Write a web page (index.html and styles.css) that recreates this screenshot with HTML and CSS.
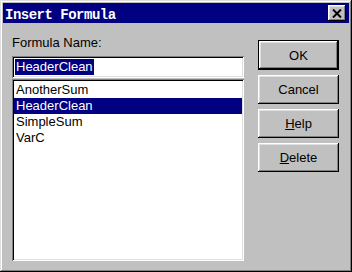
FILE: index.html
```html
<!DOCTYPE html>
<html lang="en">
<head>
  <meta charset="UTF-8">
  <title>Insert Formula</title>
  <link rel="stylesheet" href="styles.css">
</head>
<body>
  <div class="window">
    <!-- title bar -->
    <div class="title-bar">
      <span class="title">Insert Formula</span>
      <button class="close-btn">
        <svg width="10" height="9" viewBox="0 0 10 9">
          <path d="M1 0.5 L9 8.5 M9 0.5 L1 8.5" stroke="#000" stroke-width="2" fill="none"/>
        </svg>
      </button>
    </div>

    <div class="content">
      <div class="left-col">
        <div class="label">Formula Name:</div>
        <div class="textbox"><span class="selected">HeaderClean</span></div>
        <ul class="listbox">
          <li>AnotherSum</li>
          <li class="active">HeaderClean</li>
          <li>SimpleSum</li>
          <li>VarC</li>
        </ul>
      </div>
      <div class="right-col">
        <button class="btn default">OK</button>
        <button class="btn">Cancel</button>
        <button class="btn"><u>H</u>elp</button>
        <button class="btn"><u>D</u>elete</button>
      </div>
    </div>
  </div>
</body>
</html>
```

FILE: styles.css
```css
/* classic dialog look */
body {
  margin: 0;
  background: #c0c0c0;
  font-family: "Liberation Sans", Arial, sans-serif;
  font-size: 13px;
}

.window {
  width: 352px;
  height: 272px;
  box-sizing: border-box;
  padding: 3px;
  background: #c0c0c0;
  box-shadow: inset -1px -1px #000, inset 1px 1px #dfdfdf,
              inset -2px -2px #808080, inset 2px 2px #fff;
}

.title-bar {
  height: 20px;
  background: #000080;
  display: flex;
  align-items: center;
  justify-content: space-between;
  padding: 0 3px 0 2px;
}

.title {
  font-family: "Liberation Mono", "Courier New", monospace;
  font-size: 14px;
  letter-spacing: -0.5px;
  font-weight: bold;
  color: #fff;
  margin-top: 3px;
}

.close-btn {
  width: 18px;
  height: 16px;
  padding: 0;
  border: none;
  background: #c0c0c0;
  display: flex;
  align-items: center;
  justify-content: center;
  box-shadow: inset -1px -1px #000, inset 1px 1px #fff,
              inset -2px -2px #808080, inset 2px 2px #dfdfdf;
}

.content {
  display: flex;
  gap: 14px;
  padding-left: 9px;
}

.left-col {
  width: 232px;
}

.label {
  margin-top: 12px;
  line-height: 15px;
  color: #000;
}

.textbox {
  margin-top: 6px;
  height: 22px;
  box-sizing: border-box;
  padding: 3px 3px;
  background: #fff;
  box-shadow: inset 1px 1px #808080, inset -1px -1px #fff,
              inset 2px 2px #000, inset -2px -2px #dfdfdf;
}

.selected {
  display: inline-block;
  line-height: 16px;
  padding: 0 1px;
  background: #000080;
  color: #fff;
}

.listbox {
  list-style: none;
  margin: 1px 0 0 0;
  padding: 3px 2px 2px 2px;
  height: 182px;
  box-sizing: border-box;
  background: #fff;
  box-shadow: inset 1px 1px #808080, inset -1px -1px #fff,
              inset 2px 2px #000, inset -2px -2px #dfdfdf;
}

.listbox li {
  height: 16px;
  line-height: 16px;
  padding-left: 2px;
}

.listbox li.active {
  background: #000080;
  color: #fff;
}

.right-col {
  display: flex;
  flex-direction: column;
  gap: 5px;
  margin-top: 17px;
}

.btn {
  width: 81px;
  height: 29px;
  border: none;
  padding: 0;
  background: #c0c0c0;
  font-family: "Liberation Sans", Arial, sans-serif;
  font-size: 13px;
  color: #000;
  box-shadow: inset -1px -1px #000, inset 1px 1px #fff,
              inset -2px -2px #808080, inset 2px 2px #dfdfdf;
}

.btn.default {
  height: 30px;
  box-shadow: inset -1px -1px #000, inset 1px 1px #000,
              inset -2px -2px #000, inset 2px 2px #fff,
              inset -3px -3px #808080, inset 3px 3px #dfdfdf;
}

.btn u {
  text-decoration: underline;
}
```
